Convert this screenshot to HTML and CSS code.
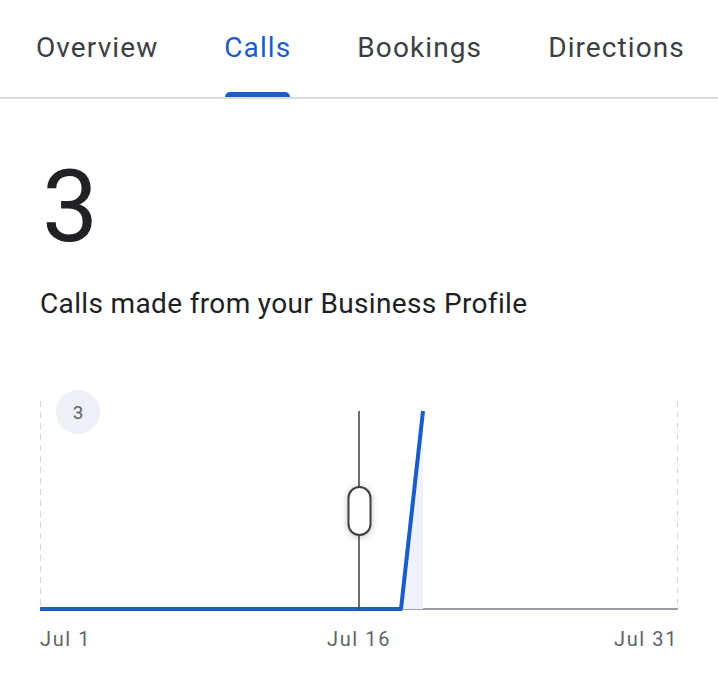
FILE: index.html
```html
<!DOCTYPE html>
<html lang="en">
<head>
    <meta charset="UTF-8">
    <meta name="viewport" content="width=device-width, initial-scale=1.0">
    <title>Calls</title>
    <link rel="stylesheet" href="styles.css">
</head>
<body>
    <nav class="tabs">
        <a class="tab">Overview</a>
        <a class="tab active">Calls</a>
        <a class="tab">Bookings</a>
        <a class="tab">Directions</a>
    </nav>

    <section class="summary">
        <div class="total">3</div>
        <p class="caption">Calls made from your Business Profile</p>
    </section>

    <section class="chart">
        <svg class="plot" width="638" height="230" viewBox="0 0 638 230">
            <!-- grid edges -->
            <line x1="0.5" y1="15" x2="0.5" y2="223" stroke="#d5d7db" stroke-width="1" stroke-dasharray="6 5"/>
            <line x1="637.5" y1="15" x2="637.5" y2="223" stroke="#d5d7db" stroke-width="1" stroke-dasharray="6 5"/>
            <line x1="0" y1="223" x2="638" y2="223" stroke="#9aa0a6" stroke-width="2"/>

            <!-- data -->
            <polygon points="361,223 383,25 383,223" fill="#eef3fb"/>
            <polyline points="0,223 361,223 383,25" fill="none" stroke="#1a5cc8" stroke-width="4" stroke-linejoin="round"/>

            <!-- cursor -->
            <line x1="319" y1="25" x2="319" y2="223" stroke="#3c4043" stroke-width="1.5"/>
            <rect class="handle" x="308.5" y="101" width="22" height="48" rx="11" fill="#fff" stroke="#3c4043" stroke-width="2"/>

            <!-- max badge -->
            <circle cx="38" cy="26" r="22" fill="#eef0f7"/>
            <text x="38" y="33" text-anchor="middle" class="badge">3</text>
        </svg>
        <div class="axis">
            <span class="start">Jul 1</span>
            <span class="mid">Jul 16</span>
            <span class="end">Jul 31</span>
        </div>
    </section>
</body>
</html>
```

FILE: styles.css
```css
body {
    margin: 0;
    background: #fff;
    font-family: Roboto, 'Noto Sans', sans-serif;
    color: #202124;
}

.tabs {
    display: flex;
    gap: 66px;
    padding-left: 36px;
    border-bottom: 2px solid #dadce0;
    height: 97px;
    overflow: hidden;
}

.tab {
    position: relative;
    display: flex;
    align-items: center;
    padding-bottom: 2px;
    font-size: 28px;
    letter-spacing: 1.1px;
    color: #3c4043;
    cursor: pointer;
}

.tab.active {
    color: #1a5cc8;
}

/* indicator sits on the divider */
.tab.active::after {
    content: "";
    position: absolute;
    left: 1px;
    right: 1px;
    bottom: 0;
    height: 5px;
    background: #1a5cc8;
    border-radius: 5px 5px 0 0;
}

.summary {
    padding: 0 40px;
}

.total {
    margin-top: 58px;
    font-size: 100px;
    line-height: 100px;
    margin-left: 2px;
}

.caption {
    margin: 30px 0 0;
    font-size: 28px;
    letter-spacing: 0.35px;
}

.chart {
    padding: 0 40px;
    margin-top: 66px;
}

.plot {
    display: block;
}

.handle {
    filter: drop-shadow(0 1px 3px rgba(0, 0, 0, 0.25));
}

.badge {
    font-family: Roboto, sans-serif;
    font-size: 19px;
    fill: #5f6368;
}

.axis {
    display: grid;
    grid-template-columns: 1fr auto 1fr;
    margin-top: 11px;
    font-size: 20px;
    letter-spacing: 1.6px;
    color: #5f6368;
}

.axis .end {
    justify-self: end;
}
```
